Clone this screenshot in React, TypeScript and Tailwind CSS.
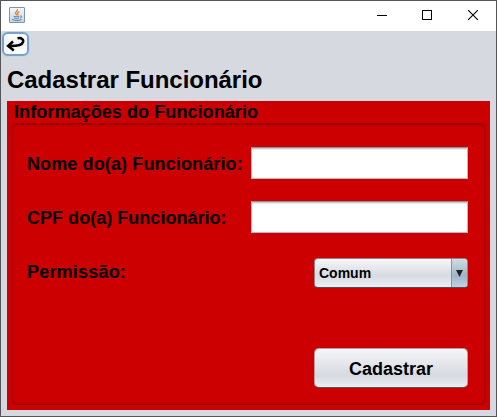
import React from "react";

function JavaIcon() {
  return (
    <svg width="16" height="16" viewBox="0 0 16 16" fill="none">
      <defs>
        <linearGradient id="tile" x1="0" y1="0" x2="0" y2="1">
          <stop offset="0" stopColor="#f7f8f9" />
          <stop offset="1" stopColor="#c3d3df" />
        </linearGradient>
      </defs>
      <rect x="0.5" y="0.5" width="15" height="15" rx="0.5" fill="url(#tile)" stroke="#7896ac" />
      <path d="M8.4 2.4C9 4.2 5.8 4.8 6.6 6.6C6.9 7.3 7.6 7.7 7.7 8.3M10.5 4.7C8.5 5.4 8.1 6.2 8.8 7.1C9.1 7.6 8.9 8 8.5 8.3" stroke="#ef7d25" strokeWidth="1.3" />
      <path d="M4.6 9.2C5.5 9.9 9.5 9.8 10.5 9.1M11.3 9.1C13.4 8.6 12.9 10.6 11 11.1M5.2 10.9C6.5 11.6 8.9 11.5 10 10.9M3.3 12.4C5 13.8 11 13.7 12.5 12.6" stroke="#5381a5" strokeWidth="1" />
    </svg>
  );
}

function TitleBar() {
  return (
    <header className="flex h-[30px] shrink-0 items-start justify-between bg-white pl-2">
      <div className="pt-1.5">
        <JavaIcon />
      </div>
      <div className="flex pr-[18px] pt-[9px]">
        <svg className="mr-[35px]" width="10" height="10" shapeRendering="crispEdges">
          <path d="M0 5.5H10" stroke="#000" />
        </svg>
        <svg className="mr-[36px]" width="10" height="10" shapeRendering="crispEdges">
          <rect x="0.5" y="0.5" width="9" height="9" fill="none" stroke="#000" />
        </svg>
        <svg width="10" height="10">
          <path d="M0 0L10 10M10 0L0 10" stroke="#000" strokeWidth="1.1" />
        </svg>
      </div>
    </header>
  );
}

function BackButton() {
  return (
    <button
      aria-label="Voltar"
      className="ml-px mt-px flex h-[24px] w-[27px] items-center justify-center rounded-[6px] border-2 border-[#73a4d1] bg-linear-to-b from-white via-[#f0f1f4] to-white shadow-[0_0_1px_#73a4d1]"
    >
      <svg width="19" height="16" viewBox="0 0 19 16" fill="none" stroke="#000">
        <path d="M11.5 2.3C15.8 1.4 17.8 3.6 17 6.1C16.2 9 12 10.2 2.5 10" strokeWidth="2.5" />
        <path d="M7 5.4L2.2 10L7.8 14.6" strokeWidth="2.6" />
      </svg>
    </button>
  );
}

function TextField({ label, tracking }: { label: string; tracking: string }) {
  return (
    <label className="flex h-8 items-center justify-between">
      <span className={`whitespace-nowrap pt-0.5 text-[18px] leading-5 ${tracking}`}>{label}</span>
      <input className="h-8 w-[217px] shrink-0 border border-t-[#8d8f94] border-x-[#c0b8ba] border-b-[#b9b9bc] bg-white shadow-[inset_0_1px_0_#c8c9cc,inset_0_2px_0_#ededed] outline-none" />
    </label>
  );
}

export default function App() {
  return (
    <main className="flex h-[417px] w-[497px] flex-col border border-[#55565a] bg-[#d6d9df] font-['Liberation_Sans',Arial,sans-serif] font-bold text-black">
      <TitleBar />
      <BackButton />
      <h1 className="ml-1.5 mt-[10px] h-7 whitespace-nowrap text-[24px] leading-7 tracking-[-0.03px]">Cadastrar Funcionário</h1>
      <section className="ml-1.5 mt-[7px] h-[309px] w-[483px] bg-[#cc0000] px-1">
        <h2 className="ml-[3px] h-[22px] whitespace-nowrap text-[18px] leading-[22px] tracking-[0.08px]">Informações do Funcionário</h2>
        <div className="flex h-[282px] flex-col rounded-[6px] border border-[#a00000] pl-[15px] pr-[17px] pt-[23px] shadow-[inset_0_1px_2px_#9c0000,inset_0_0_3px_#a80000]">
          <TextField label="Nome do(a) Funcionário:" tracking="tracking-[0.12px]" />
          <div className="mt-[22px]">
            <TextField label="CPF do(a) Funcionário:" tracking="tracking-[0.03px]" />
          </div>
          <div className="mt-[25px] flex h-[30px] justify-between">
            <span className="pt-1 text-[18px] leading-5 tracking-[0.2px]">Permissão:</span>
            <button className="flex w-[154px] overflow-hidden rounded-[4px] border border-[#9b8084] border-b-[#45505a] bg-linear-to-b from-[#f5f6f8] via-[#d7dae1] via-60% to-[#eceef3] text-left">
              <span className="flex-1 pl-1 text-[14px] leading-7">Comum</span>
              <span className="flex h-full w-4 items-center justify-center border-l border-[#7f98aa] bg-linear-to-b from-[#d0dce5] via-[#9fb5c7] via-60% to-[#bfd4e3]">
                <svg width="7" height="7">
                  <path d="M0 0H7L3.5 7Z" fill="#202428" />
                </svg>
              </span>
            </button>
          </div>
          <button className="mt-[60px] h-10 w-[154px] shrink-0 self-end rounded-[5px] border border-[#b79ca0] border-b-[#5a5558] bg-linear-to-b from-[#f5f6f8] via-[#d7dae1] via-70% to-[#eceef4] pt-0.5 text-[18px] leading-9">
            Cadastrar
          </button>
        </div>
      </section>
    </main>
  );
}
